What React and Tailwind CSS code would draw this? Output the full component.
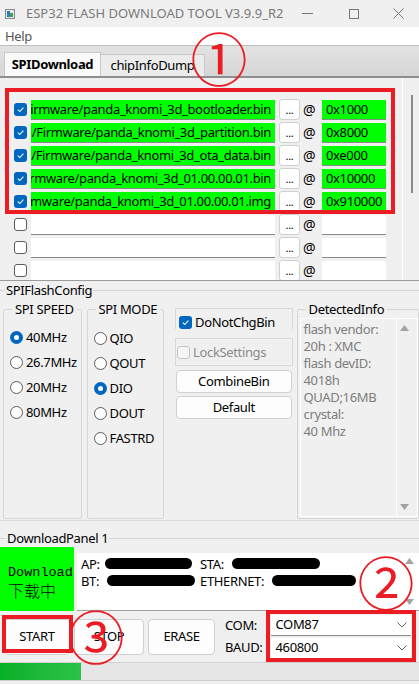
import React from "react";

const files = [
	{ path: "D:/panda_knomi/Firmware/panda_knomi_3d_bootloader.bin", addr: "0x1000" },
	{ path: "D:/panda_knomi/Firmware/panda_knomi_3d_partition.bin", addr: "0x8000" },
	{ path: "D:/panda_knomi/Firmware/panda_knomi_3d_ota_data.bin", addr: "0xe000" },
	{ path: "D:/panda_knomi/Firmware/panda_knomi_3d_01.00.00.01.bin", addr: "0x10000" },
	{ path: "D:/panda_knomi/Firmware/panda_knomi_3d_01.00.00.01.img", addr: "0x910000" },
	{ path: "", addr: "" },
	{ path: "", addr: "" },
	{ path: "", addr: "" },
];

function CheckBox({ checked, disabled }) {
	if (checked) {
		return (
			<span className="flex items-center justify-center w-[13px] h-[13px] rounded-[3px] bg-[#0067c0] shrink-0">
				<svg width="9" height="9" viewBox="0 0 10 10">
					<path d="M2 5.2 L4.2 7.3 L8.2 2.8" fill="none" stroke="white" strokeWidth="1.2" />
				</svg>
			</span>
		);
	}
	return (
		<span
			className={`w-[13px] h-[13px] rounded-[3px] border shrink-0 ${
				disabled ? "border-[#c4c4c4] bg-[#f5f5f5]" : "border-[#5c5c5c] bg-white"
			}`}
		></span>
	);
}

function Radio({ checked, label }) {
	return (
		<div className="flex items-center h-[25px]">
			{checked ? (
				<span className="flex items-center justify-center w-[13px] h-[13px] rounded-full bg-[#0067c0]">
					<span className="w-[5px] h-[5px] rounded-full bg-white"></span>
				</span>
			) : (
				<span className="w-[13px] h-[13px] rounded-full border border-[#5c5c5c] bg-white"></span>
			)}
			<span className="ml-[3px]">{label}</span>
		</div>
	);
}

function Marker({ n, className }) {
	return (
		<span
			className={`absolute flex items-center justify-center w-[56px] h-[56px] text-[57px] leading-none tracking-normal text-[#ec1c24] font-['Noto_Sans_CJK_SC',sans-serif] ${className}`}
		>
			{n}
		</span>
	);
}

function Blob({ className }) {
	return <span className={`absolute h-[11px] rounded-full bg-black ${className}`}></span>;
}

export default function App() {
	return (
		<div className="relative w-[419px] h-[684px] overflow-hidden bg-[#f0f0f0] text-[13px] leading-[17px] tracking-[-0.35px] text-black font-['Noto_Sans','Noto_Sans_CJK_SC',sans-serif]">
			{/* title bar */}
			<div className="h-[27px] flex items-center pl-[5px] text-[#7a7a7a] tracking-normal">
				<svg width="10" height="10" viewBox="0 0 10 10">
					<rect x="0.5" y="0.5" width="9" height="9" fill="#e8e8e8" stroke="#8a8a8a" />
					<rect x="2" y="2" width="3" height="6" fill="#2f7fc0" />
					<rect x="5" y="4" width="3" height="4" fill="#3aa55a" />
				</svg>
				<span className="ml-[11px]">ESP32 FLASH DOWNLOAD TOOL V3.9.9_R2</span>
				<div className="ml-auto flex items-center">
					<span className="w-[11px] h-px bg-[#777] mr-[36px]"></span>
					<span className="w-[10px] h-[10px] border border-[#777] mr-[34px]"></span>
					<svg width="11" height="11" viewBox="0 0 11 11" className="mr-[15px]">
						<path d="M0.5 0.5 L10.5 10.5 M10.5 0.5 L0.5 10.5" stroke="#777" strokeWidth="1" />
					</svg>
				</div>
			</div>

			{/* menu */}
			<div className="h-[18px] bg-white flex items-center pl-[5px] text-[#555]">Help</div>

			{/* tabs */}
			<div className="h-[33px] border-t border-[#bdbdbd] border-b-2 border-b-[#8e8e8e] bg-gradient-to-b from-[#e3e3e3] to-[#d6d6d6] flex items-end pl-[4px]">
				<div className="h-[24px] w-[97px] bg-[#fafafa] border border-b-0 border-[#c8c8c8] flex items-center justify-center font-bold">
					SPIDownload
				</div>
				<div className="h-[22px] w-[104px] bg-[#ececec] border border-b-0 border-l-0 border-[#c8c8c8] flex items-center justify-center">
					chipInfoDump
				</div>
			</div>

			{/* file list */}
			<div className="h-[203px] flex border-b border-[#9c9c9c]">
				<div className="w-[402px] pt-[20px] overflow-hidden">
					{files.map((f, i) => (
						<div key={i} className="h-[23px] flex items-center pl-[14px]">
							<CheckBox checked={!!f.path} />
							<div
								className={`ml-[4px] w-[244px] h-[20px] flex items-center justify-end overflow-hidden whitespace-nowrap pr-[4px] border-b border-[#8a8a8a] ${
									f.path ? "bg-[#00ff00]" : "bg-white"
								}`}
							>
								{f.path}
							</div>
							<div className="ml-[4px] w-[21px] h-[21px] bg-white border border-[#d0d0d0] rounded-[3px] flex items-center justify-center text-[11px] leading-none">
								...
							</div>
							<span className="ml-[3px] w-[16px] text-[14px]">@</span>
							<div
								className={`ml-[3px] w-[64px] h-[20px] flex items-center pl-[4px] border-b border-[#8a8a8a] ${
									f.addr ? "bg-[#00ff00]" : "bg-white"
								}`}
							>
								{f.addr}
							</div>
						</div>
					))}
				</div>
				<div className="flex-1 border-l border-white flex justify-center pt-[17px]">
					<div className="w-[2px] h-[98px] bg-[#8a8a8a] ml-[1px]"></div>
				</div>
			</div>

			{/* SPIFlashConfig */}
			<div className="h-[18px] flex items-center">
				<span className="w-[5px] h-px bg-[#d4d4d4]"></span>
				<span className="px-[1px]">SPIFlashConfig</span>
				<span className="flex-1 h-px bg-[#d4d4d4]"></span>
			</div>

			<div className="h-[222px] flex pl-[3px] pt-[2px] border-b border-[#d8d8d8]">
				<fieldset className="w-[80px] h-[218px] border border-[#d6d6d6] rounded-[2px] pl-[6px]">
					<legend className="ml-[2px] px-[3px] whitespace-nowrap">SPI SPEED</legend>
					<div className="pt-[7px]">
						<Radio checked label="40MHz" />
						<Radio label="26.7MHz" />
						<Radio label="20MHz" />
						<Radio label="80MHz" />
					</div>
				</fieldset>
				<fieldset className="ml-[5px] w-[79px] h-[218px] border border-[#d6d6d6] rounded-[2px] pl-[6px]">
					<legend className="ml-[2px] px-[3px] whitespace-nowrap">SPI MODE</legend>
					<div className="pt-[8px]">
						<Radio label="QIO" />
						<Radio label="QOUT" />
						<Radio checked label="DIO" />
						<Radio label="DOUT" />
						<Radio label="FASTRD" />
					</div>
				</fieldset>
				<div className="ml-[11px] w-[120px] pt-[7px] flex flex-col">
					<div className="h-[21px] border border-b-0 border-[#d8d8d8] flex items-end pl-[3px]">
						<CheckBox checked />
						<span className="ml-[3px] leading-[14px]">DoNotChgBin</span>
					</div>
					<div className="mt-[9px] h-[28px] border border-[#d8d8d8] flex items-center pl-[1px]">
						<CheckBox disabled />
						<span className="ml-[3px] text-[#8a8a8a]">LockSettings</span>
					</div>
					<div className="mt-[4px] mx-[1px] h-[23px] bg-[#fdfdfd] border border-[#d0d0d0] rounded-[4px] flex items-center justify-center">
						CombineBin
					</div>
					<div className="mt-[3px] mx-[1px] h-[23px] bg-[#fdfdfd] border border-[#d0d0d0] rounded-[4px] flex items-center justify-center">
						Default
					</div>
				</div>
				<fieldset className="ml-[4px] w-[125px] h-[218px] border border-[#d6d6d6] rounded-[2px] pl-[2px] pb-[1px]">
					<legend className="ml-[6px] px-[3px] whitespace-nowrap">DetectedInfo</legend>
					<div className="h-full flex border border-white">
						<div className="w-[95px] pl-[3px] pt-[2px] text-[#7d7d7d]">
							<div>flash vendor:</div>
							<div>20h : XMC</div>
							<div>flash devID:</div>
							<div>4018h</div>
							<div>QUAD;16MB</div>
							<div>crystal:</div>
							<div>40 Mhz</div>
						</div>
						<div className="w-[17px] border-l border-white flex flex-col items-center justify-between py-[6px]">
							<svg width="9" height="6" viewBox="0 0 9 6">
								<path d="M4.5 0 L9 6 L0 6 Z" fill="#a3a3a3" />
							</svg>
							<svg width="9" height="6" viewBox="0 0 9 6">
								<path d="M0 0 L9 0 L4.5 6 Z" fill="#a3a3a3" />
							</svg>
						</div>
					</div>
				</fieldset>
			</div>

			{/* DownloadPanel */}
			<div className="h-[26px] flex items-center pt-[8px]">
				<span className="w-[6px] h-px bg-[#d4d4d4]"></span>
				<span className="px-[1px]">DownloadPanel 1</span>
				<span className="flex-1 h-px bg-[#d4d4d4]"></span>
			</div>

			<div className="flex h-[64px]">
				<div className="w-[74px] bg-[#00ff00] flex flex-col justify-center pl-[8px] pt-[6px] tracking-normal">
					<span className="font-['Liberation_Mono',monospace] text-[13.5px] leading-[16px]">Download</span>
					<span className="font-['Noto_Sans_CJK_SC',sans-serif] text-[16px] leading-[19px] font-light">下载中</span>
				</div>
				<div className="relative ml-[3px] mt-[6px] flex-1 bg-white border-b border-[#a0a0a0] flex">
					<div className="flex-1 pl-[4px] pt-[3px]">
						<div className="flex">
							<span className="w-[119px]">AP:</span>
							<span>STA:</span>
						</div>
						<div className="flex">
							<span className="w-[119px]">BT:</span>
							<span>ETHERNET:</span>
						</div>
					</div>
					<Blob className="left-[28px] top-[5px] w-[87px]" />
					<Blob className="left-[155px] top-[5px] w-[88px]" />
					<Blob className="left-[30px] top-[22px] w-[88px]" />
					<Blob className="left-[195px] top-[22px] w-[84px]" />
					<div className="w-[19px] flex flex-col items-center justify-between py-[5px]">
						<svg width="9" height="6" viewBox="0 0 9 6">
							<path d="M4.5 0 L9 6 L0 6 Z" fill="#a3a3a3" />
						</svg>
						<svg width="9" height="6" viewBox="0 0 9 6">
							<path d="M0 0 L9 0 L4.5 6 Z" fill="#a3a3a3" />
						</svg>
					</div>
				</div>
			</div>

			{/* controls */}
			<div className="h-[51px] flex items-center pl-[4px]">
				<div className="w-[66px] h-[36px] bg-[#fdfdfd] border border-[#d0d0d0] rounded-[4px] flex items-center justify-center">
					START
				</div>
				<div className="ml-[4px] w-[70px] h-[36px] bg-[#fdfdfd] border border-[#d0d0d0] rounded-[4px] flex items-center justify-center">
					STOP
				</div>
				<div className="ml-[4px] w-[67px] h-[36px] bg-[#fdfdfd] border border-[#d0d0d0] rounded-[4px] flex items-center justify-center">
					ERASE
				</div>
				<div className="ml-[10px] flex flex-col gap-[5px]">
					<span>COM:</span>
					<span>BAUD:</span>
				</div>
				<div className="ml-[9px] w-[140px] flex flex-col gap-[2px]">
					<div className="h-[21px] bg-white border-b border-[#8a8a8a] flex items-center pl-[4px] pr-[4px]">
						<span className="flex-1">COM87</span>
						<svg width="10" height="6" viewBox="0 0 10 6">
							<path d="M0.5 0.5 L5 5 L9.5 0.5" fill="none" stroke="#666" />
						</svg>
					</div>
					<div className="h-[21px] bg-white border-b border-[#8a8a8a] flex items-center pl-[4px] pr-[4px]">
						<span className="flex-1">460800</span>
						<svg width="10" height="6" viewBox="0 0 10 6">
							<path d="M0.5 0.5 L5 5 L9.5 0.5" fill="none" stroke="#666" />
						</svg>
					</div>
				</div>
			</div>

			{/* progress */}
			<div className="h-[19px] bg-[#e6e6e6] border-t border-b border-[#d0d0d0] flex">
				<div className="w-[81px] bg-gradient-to-r from-[#06b025] to-[#2cc24a]"></div>
			</div>

			{/* annotations */}
			<div className="absolute left-[5px] top-[88px] w-[390px] h-[126px] border-[4px] border-[#ec1c24]"></div>
			<div className="absolute left-[266px] top-[610px] w-[150px] h-[52px] border-[4px] border-[#ec1c24]"></div>
			<div className="absolute left-[2px] top-[615px] w-[71px] h-[38px] border-[4px] border-[#ec1c24]"></div>
			<Marker n="①" className="left-[191px] top-[28px]" />
			<Marker n="②" className="left-[358px] top-[552px]" />
			<Marker n="③" className="left-[68px] top-[606px]" />
		</div>
	);
}
